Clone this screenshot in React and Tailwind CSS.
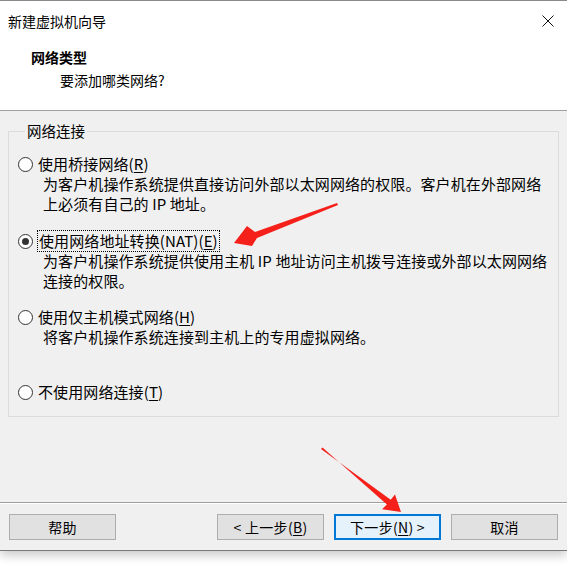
import React from "react";

const options = [
    {
        label: "使用桥接网络",
        key: "R",
        desc: ["为客户机操作系统提供直接访问外部以太网网络的权限。客户机在外部网络", "上必须有自己的 IP 地址。"],
        gap: "mt-[13px]",
    },
    {
        label: "使用网络地址转换(NAT)",
        key: "E",
        desc: ["为客户机操作系统提供使用主机 IP 地址访问主机拨号连接或外部以太网网络", "连接的权限。"],
        checked: true,
        gap: "mt-[17px]",
    },
    {
        label: "使用仅主机模式网络",
        key: "H",
        desc: ["将客户机操作系统连接到主机上的专用虚拟网络。"],
        gap: "mt-[16px]",
    },
    {
        label: "不使用网络连接",
        key: "T",
        desc: [],
        gap: "mt-[35px]",
    },
];

const Radio = ({ checked }) => (
    <span className="w-[15px] h-[15px] shrink-0 rounded-full border border-[#333] bg-white flex items-center justify-center">
        {checked && <span className="w-[7px] h-[7px] rounded-full bg-[#333]" />}
    </span>
);

const Button = ({ children, primary }) => (
    <button
        className={
            primary
                ? "w-[107px] h-[26px] bg-[#e5f1fb] border-2 border-[#0078d7] text-[14px] leading-[20px] tracking-[0.3px] text-black"
                : "w-[107px] h-[26px] bg-[#e1e1e1] border border-[#adadad] text-[14px] leading-[20px] tracking-[0.3px] text-black"
        }
    >
        {children}
    </button>
);

const App = () => {
    return (
        <div className="relative w-[567px] h-[573px] bg-white font-['Noto_Sans_CJK_SC','Microsoft_YaHei',sans-serif] text-black">
            <div className="h-[551px] flex flex-col bg-[#f0f0f0] border-t border-[#8a8a8a] border-b border-b-[#7a7a7a] shadow-[0_4px_10px_rgba(0,0,0,0.22)]">
                {/* title bar */}
                <div className="h-[39px] bg-white flex items-center justify-between pl-2 pr-[13px]">
                    <span className="text-[14px] leading-[20px]">新建虚拟机向导</span>
                    <svg width="12" height="12" viewBox="0 0 12 12">
                        <path d="M0.5 0.5 L11.5 11.5 M11.5 0.5 L0.5 11.5" stroke="#111" strokeWidth="1" fill="none" />
                    </svg>
                </div>

                {/* header */}
                <div className="h-[71px] bg-white border-b border-[#a0a0a0] pl-[31px] pt-[7px]">
                    <div className="text-[14px] leading-[20px] font-bold">网络类型</div>
                    <div className="text-[14px] leading-[20px] pl-[29px] mt-[3px]">要添加哪类网络?</div>
                </div>

                {/* body */}
                <div className="flex-1 flex flex-col pt-[10px]">
                    <fieldset className="mx-2 border border-[#dcdcdc] pl-[9px] pb-[14px]">
                        <legend className="ml-[7px] px-[2px] text-[14.5px] leading-[20px]">网络连接</legend>
                        {options.map((opt) => (
                            <div key={opt.key} className={opt.gap}>
                                <div className="flex items-center h-[20px]">
                                    <Radio checked={opt.checked} />
                                    <span
                                        className={
                                            opt.checked
                                                ? "ml-[4px] px-[1px] border border-dotted border-black text-[15px] leading-[20px] tracking-[0.1px]"
                                                : "ml-[5px] text-[15px] leading-[20px] tracking-[0.1px]"
                                        }
                                    >
                                        {opt.label}(<span className="underline underline-offset-2">{opt.key}</span>)
                                    </span>
                                </div>
                                {opt.desc.map((line) => (
                                    <div key={line} className="pl-[25px] text-[15px] leading-[20px] tracking-[0.1px] whitespace-nowrap">
                                        {line}
                                    </div>
                                ))}
                            </div>
                        ))}
                    </fieldset>
                    <div className="flex-1" />
                    {/* footer */}
                    <div className="border-t border-[#a0a0a0] shadow-[inset_0_1px_0_#ffffff] pt-[11px] pb-[10px] pl-[9px] pr-[9px] flex items-center">
                        <Button>帮助</Button>
                        <div className="flex-1" />
                        <div className="flex gap-[10px]">
                            <Button>
                                &lt; 上一步(<span className="underline underline-offset-2">B</span>)
                            </Button>
                            <Button primary>
                                下一步(<span className="underline underline-offset-2">N</span>) &gt;
                            </Button>
                            <Button>取消</Button>
                        </div>
                    </div>
                </div>
            </div>

            {/* annotation arrows */}
            <svg className="absolute inset-0 pointer-events-none" width="567" height="573" viewBox="0 0 567 573">
                <polygon
                    points="337,203 255,232 247,226 234,243 252,246 257,238 338,205"
                    fill="#f5201a"
                />
                <polygon
                    points="321,449 390.7,499.8 395,494.5 401,512 382,509.3 386.9,504.4 322.5,447.5"
                    fill="#f5201a"
                />
            </svg>
        </div>
    );
};

export default App;
